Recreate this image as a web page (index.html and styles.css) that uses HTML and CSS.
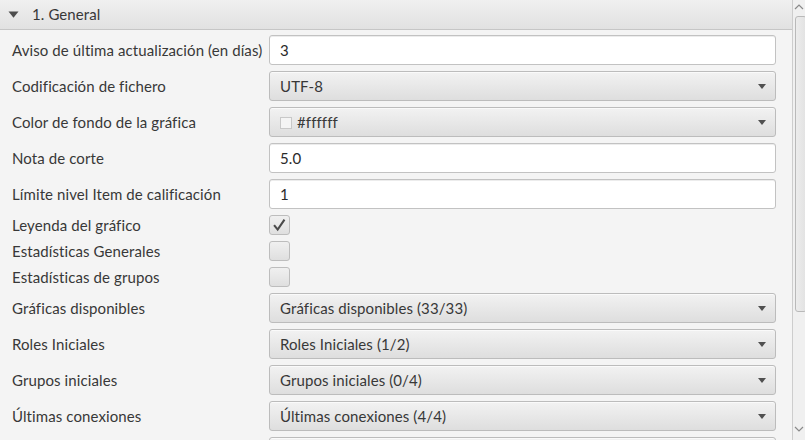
FILE: index.html
```html
<!DOCTYPE html>
<html lang="es">
<head>
<meta charset="utf-8">
<title>Configuración</title>
<link rel="stylesheet" href="styles.css">
</head>
<body>
<div class="window">
  <div class="viewport">
    <div class="titled">
      <div class="title">
        <svg class="tri" width="11" height="7" viewBox="0 0 11 7"><polygon points="0.5,0.5 10.5,0.5 5.5,6.8" fill="#4d4d4d"/></svg>
        <span>1. General</span>
      </div>
      <div class="form">
        <div class="lbl">Aviso de última actualización (en días)</div>
        <div class="field">3</div>

        <div class="lbl">Codificación de fichero</div>
        <div class="combo"><span>UTF-8</span><i class="arrow"></i></div>

        <div class="lbl">Color de fondo de la gráfica</div>
        <div class="combo"><span class="swatch"></span><span>#ffffff</span><i class="arrow"></i></div>

        <div class="lbl">Nota de corte</div>
        <div class="field">5.0</div>

        <div class="lbl">Límite nivel Item de calificación</div>
        <div class="field">1</div>

        <div class="lbl small">Leyenda del gráfico</div>
        <div class="check"><svg width="21" height="21" viewBox="0 0 21 21"><polyline points="4.5,10 8.5,15 16,4" fill="none" stroke="#4a4a4a" stroke-width="2.3"/></svg></div>

        <div class="lbl small">Estadísticas Generales</div>
        <div class="check"></div>

        <div class="lbl small">Estadísticas de grupos</div>
        <div class="check"></div>

        <div class="lbl">Gráficas disponibles</div>
        <div class="combo"><span>Gráficas disponibles (33/33)</span><i class="arrow"></i></div>

        <div class="lbl">Roles Iniciales</div>
        <div class="combo"><span>Roles Iniciales (1/2)</span><i class="arrow"></i></div>

        <div class="lbl">Grupos iniciales</div>
        <div class="combo"><span>Grupos iniciales (0/4)</span><i class="arrow"></i></div>

        <div class="lbl">Últimas conexiones</div>
        <div class="combo"><span>Últimas conexiones (4/4)</span><i class="arrow"></i></div>

        <div class="lbl"></div>
        <div class="combo"><span></span><i class="arrow"></i></div>
      </div>
    </div>
  </div>
  <div class="vscroll">
    <svg class="sarrow up" width="10" height="6" viewBox="0 0 10 6"><polyline points="1,5 5,1 9,5" fill="none" stroke="#8a8a8a" stroke-width="1.2"/></svg>
    <div class="track"><div class="thumb"></div></div>
    <svg class="sarrow down" width="10" height="6" viewBox="0 0 10 6"><polyline points="1,1 5,5 9,1" fill="none" stroke="#8a8a8a" stroke-width="1.2"/></svg>
  </div>
</div>
</body>
</html>
```

FILE: styles.css
```css
* { box-sizing: border-box; }
html, body { margin: 0; padding: 0; }
body {
  width: 805px;
  height: 440px;
  overflow: hidden;
  background: #f4f4f4;
  font-family: "Lato", "Liberation Sans", sans-serif;
  font-size: 15px;
  letter-spacing: 0.1px;
  color: #383838;
}
.window {
  display: flex;
  width: 805px;
  height: 440px;
}
.viewport {
  flex: 1;
  height: 440px;
  overflow: hidden;
  background: #f4f4f4;
}
.title {
  height: 30px;
  display: flex;
  align-items: center;
  background: linear-gradient(#f0f0f0, #e1e1e1);
  border-bottom: 1px solid #c6c6c6;
  padding-left: 8px;
  padding-bottom: 1px;
}
.tri { margin-right: 13px; margin-top: 1px; }
.form {
  display: grid;
  grid-template-columns: 257px 507px;
  row-gap: 6px;
  padding: 5px 0 0 12px;
}
.lbl {
  display: flex;
  align-items: center;
  height: 30px;
  white-space: nowrap;
}
.lbl.small { height: 20px; }
.field {
  height: 30px;
  background: #ffffff;
  border: 1px solid #c2c2c2;
  border-radius: 3px;
  box-shadow: inset 0 1px 0 #ececec;
  display: flex;
  align-items: center;
  padding-left: 10px;
  color: #2a2a2a;
}
.combo {
  height: 30px;
  border: 1px solid #bcbcbc;
  border-radius: 3px;
  background: linear-gradient(#f2f2f2, #dedede);
  box-shadow: inset 0 1px 0 #fafafa;
  display: flex;
  align-items: center;
  padding: 0 9px 0 10px;
}
.combo span:not(.swatch) { flex: 0 0 auto; }
.combo .arrow {
  margin-left: auto;
  width: 0;
  height: 0;
  border-left: 4.5px solid transparent;
  border-right: 4.5px solid transparent;
  border-top: 5px solid #505050;
}
.swatch {
  width: 12px;
  height: 12px;
  border: 1px solid #c8c8c8;
  background: #f4f4f4;
  margin-right: 5px;
  margin-top: 1px;
}
.check {
  width: 21px;
  height: 20px;
  border: 1px solid #bdbdbd;
  border-radius: 3px;
  background: linear-gradient(#f0f0f0, #dfdfdf);
  display: flex;
  align-items: center;
  justify-content: center;
}
.check svg { display: block; }
.vscroll {
  width: 13px;
  height: 440px;
  border-left: 1px solid #cdcdcd;
  background: #f0f0f0;
  display: flex;
  flex-direction: column;
  align-items: center;
}
.sarrow { display: block; flex: 0 0 auto; }
.sarrow.up { margin-top: 4px; }
.sarrow.down { margin-bottom: 8px; }
.track {
  flex: 1;
  width: 100%;
  padding-top: 6px;
  padding-left: 2px;
}
.thumb {
  height: 296px;
  width: 12px;
  border: 1px solid #b9b9b9;
  border-radius: 3px;
  background: linear-gradient(90deg, #ececec, #e2e2e2);
}
```
